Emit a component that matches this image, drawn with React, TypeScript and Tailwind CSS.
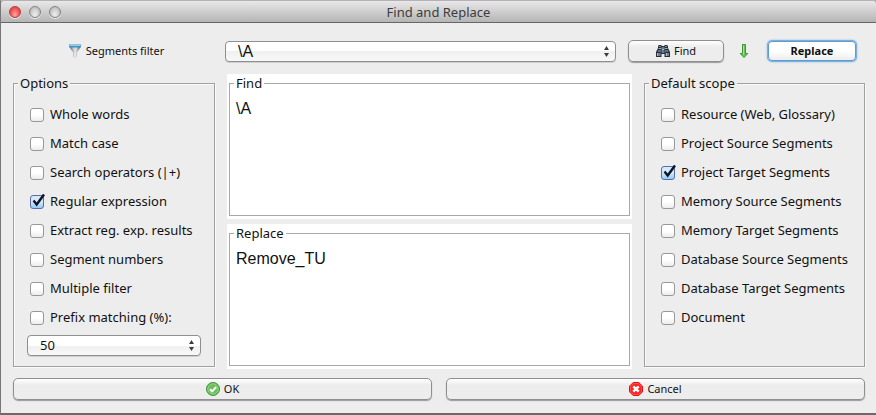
import { useState } from "react";
import type { ReactNode } from "react";

const OPTIONS = [
  "Whole words",
  "Match case",
  "Search operators (|+)",
  "Regular expression",
  "Extract reg. exp. results",
  "Segment numbers",
  "Multiple filter",
  "Prefix matching (%):",
];

const SCOPES = [
  "Resource (Web, Glossary)",
  "Project Source Segments",
  "Project Target Segments",
  "Memory Source Segments",
  "Memory Target Segments",
  "Database Source Segments",
  "Database Target Segments",
  "Document",
];

function FunnelIcon() {
  return (
    <svg width="14" height="16" viewBox="0 0 14 16" aria-hidden="true">
      <defs>
        <linearGradient id="funnel" x1="0" x2="1">
          <stop offset="0" stopColor="#55595d" />
          <stop offset="0.4" stopColor="#c9cccf" />
          <stop offset="0.55" stopColor="#e2e4e6" />
          <stop offset="1" stopColor="#4c5054" />
        </linearGradient>
      </defs>
      <path d="M1 3.5h12L9 9.5V13l-1.5 2H6L5 13V9.5z" fill="url(#funnel)" />
      <path d="M6 9.5h2V14H6z" fill="#e4e6e7" />
      <path d="M.8 1.5h12.4l-.7 3h-11z" fill="#3f96c6" />
      <path d="M1.5 2.5h11" stroke="#8fcdea" />
    </svg>
  );
}

function BinocularsIcon() {
  return (
    <svg width="14" height="14" viewBox="0 0 14 14" aria-hidden="true">
      <path d="M3 1h2.5v1h3V1H11l1 1v2l2 4v5H8.500V10h-3v3H0V8l2-4V2z" fill="#27303a" />
      <path d="M3 2.5h2M9 2.5h2" stroke="#7f8e9c" />
      <path d="M2.5 4.5h3M8.5 4.5h3" stroke="#9dacb9" />
      <path d="M2 6h3v2H1.5zM9 6h3l.5 2H9z" fill="#5d7083" />
      <path d="M5.5 3h3v6h-3z" fill="#66788a" />
      <path d="M6 5.5h2" stroke="#a9b9c8" />
      <path d="M1 9h3.500v3H1zM9.500 9H13v3H9.500z" fill="#6f8295" />
      <path d="M1.5 9v3M10.5 9v3" stroke="#a9b9c8" />
    </svg>
  );
}

function DownArrowIcon() {
  return (
    <svg width="10" height="16" viewBox="0 0 10 16" aria-hidden="true">
      <path d="M3.5 1.5h3v9h2.3L5 14.5l-3.8-4h2.3z" fill="#6cc15c" stroke="#3b9636" />
      <path d="M4.5 2.5v9" stroke="#a8e29b" />
    </svg>
  );
}

function OkIcon() {
  return (
    <svg width="14" height="14" viewBox="0 0 14 14" aria-hidden="true">
      <circle cx="7" cy="7" r="6.5" fill="#4fae45" stroke="#3f9638" />
      <circle cx="7" cy="7" r="5.3" fill="#6bc05c" stroke="#a5dc9a" strokeWidth="0.8" />
      <path d="M4 7.2l2.2 2.2L10.2 5" fill="none" stroke="#fff" strokeWidth="2" />
    </svg>
  );
}

function CancelIcon() {
  return (
    <svg width="14" height="14" viewBox="0 0 14 14" aria-hidden="true">
      <path d="M4.2.5h5.6l3.7 3.7v5.6l-3.7 3.7H4.2L.5 9.8V4.2z" fill="#f22" stroke="#e01010" />
      <path d="M4.5 1.5h5l3 3v5l-3 3h-5l-3-3v-5z" fill="none" stroke="#ff7070" strokeWidth="0.6" />
      <path d="M4.3 4.3l5.4 5.4M9.7 4.3L4.3 9.7" stroke="#fff" strokeWidth="2.4" />
    </svg>
  );
}

function Light({ red = false }: { red?: boolean }) {
  return (
    <button
      type="button"
      aria-label={red ? "Close" : "Window control"}
      className={
        red
          ? "size-3 rounded-full border border-[#a84448] bg-radial-[at_50%_75%] from-[#ffaaa4] via-[#fb5a5c] to-[#c8343a] shadow-[0_1px_0_#eee]"
          : "size-3 rounded-full border border-[#858585] bg-radial-[at_50%_75%] from-[#efefef] via-[#cfcfcf] to-[#a8a8a8] shadow-[0_1px_0_#eee]"
      }
    />
  );
}

function CheckRow({ label, initial }: { label: string; initial: boolean }) {
  const [checked, setChecked] = useState(initial);
  return (
    <label className="flex h-[29px] items-center gap-1.5 whitespace-nowrap">
      <span className="relative flex">
        <input
          type="checkbox"
          checked={checked}
          onChange={() => setChecked(!checked)}
          className="size-[14px] appearance-none rounded-[3px] border border-[#989898] bg-linear-to-b from-white from-50% to-[#ececec] checked:border-[#5a6da8] checked:from-[#d5e9fa] checked:to-[#8ccbf8]"
        />
        {checked && (
          <svg
            width="16"
            height="16"
            viewBox="0 0 16 16"
            className="pointer-events-none absolute bottom-0 left-0"
            aria-hidden="true"
          >
            <path d="M3.5 7.5l3.2 4L14 1.5" fill="none" stroke="#0b1526" strokeWidth="2.4" />
          </svg>
        )}
      </span>
      {label}
    </label>
  );
}

function Popup({ id, label, value, className }: { id: string; label?: string; value: string; className: string }) {
  return (
    <div className="relative">
      <select
        id={id}
        aria-label={label}
        defaultValue={value}
        className={`block h-[21px] w-full appearance-none rounded-[4px] border border-[#8f8f8f] bg-linear-to-b from-white from-50% via-[#f0f0f0] via-50% to-[#f8f8f8] px-3 leading-[19px] shadow-[0_1px_0_#d0d0d0] ${className}`}
      >
        <option>{value}</option>
      </select>
      <svg
        width="5"
        height="11"
        viewBox="0 0 5 11"
        className="pointer-events-none absolute top-[5px] right-[7px]"
        aria-hidden="true"
      >
        <path d="M2.5 0L5 4H0zM0 7h5L2.5 11z" fill="#3c3c3c" />
      </svg>
    </div>
  );
}

function Group({ title, children }: { title: string; children: ReactNode }) {
  return (
    <fieldset className="mb-[2px] min-w-0 border border-[#a0a0a0] px-1 pb-[10px] shadow-[1px_1px_0_#fafafa,inset_1px_1px_0_#fafafa]">
      <legend className="bg-[#ededed] px-0.5 leading-[18px]">{title}</legend>
      <div className="px-[9px] pt-2">{children}</div>
    </fieldset>
  );
}

function TextPanel({ title, value }: { title: string; value: string }) {
  return (
    <div className="flex flex-1 bg-white px-[2px] pb-[3px]">
      <fieldset className="flex min-w-0 flex-1 border border-[#a8a8a8] px-1">
        <legend className="bg-white px-0.5 leading-[18px]">{title}</legend>
        <textarea
          aria-label={title}
          defaultValue={value}
          spellCheck={false}
          className="block w-full resize-none px-0.5 pt-[7px] font-['Liberation_Sans',sans-serif] text-[16px] leading-5 outline-none"
        />
      </fieldset>
    </div>
  );
}

const plainButton =
  "flex h-[22px] items-center justify-center gap-1 rounded-[5px] border border-[#8f8f8f] bg-linear-to-b from-white to-[#ededed] to-30% text-[11px] shadow-[0_1px_1px_#999]";

export default function App() {
  return (
    <div className="border-t border-b-2 border-l border-t-[#b5b0b5] border-b-[#6a6a6a] border-l-[#777] bg-[#b5b0b5] font-['Noto_Sans',sans-serif] text-[13px] text-[#111]">
      <main className="rounded-t-[4px] bg-[#ededed]">
        <header className="grid h-[22px] grid-cols-[60px_1fr_60px] items-center rounded-t-[4px] border-b border-[#666] bg-linear-to-b from-[#e8e8e8] to-[#b5b5b5] px-2">
          <div className="flex gap-2">
            <Light red />
            <Light />
            <Light />
          </div>
          <h1 className="text-center leading-5 text-[#3c3c3c]">Find and Replace</h1>
        </header>

        <div className="pt-[17px] pr-[11px] pb-[13px] pl-3">
          <div className="flex h-[22px] items-center">
            <label
              htmlFor="segments-filter"
              className="flex w-[212px] items-center justify-center gap-1 pr-1.5 text-[11px]"
            >
              <FunnelIcon />
              Segments filter
            </label>
            <div className="flex-1">
              <Popup
                id="segments-filter"
                value="\A"
                className="font-['Liberation_Sans',sans-serif] text-[16px]"
              />
            </div>
            <button type="button" className={`${plainButton} ml-3 w-24`}>
              <BinocularsIcon />
              Find
            </button>
            <button type="button" aria-label="Search direction" className="mx-[15px]">
              <DownArrowIcon />
            </button>
            <button
              type="button"
              className="mr-[9px] ml-1 h-5 w-[88px] rounded-[4px] border border-[#5d9bd0] bg-linear-to-b from-white from-50% to-[#ededed] text-[11px] leading-4 font-bold shadow-[0_0_0_1px_#79b0de,0_0_2px_1px_#8fbfe6]"
            >
              Replace
            </button>
          </div>

          <div className="mt-3 grid grid-cols-[202px_1fr_221px] gap-3">
            <Group title="Options">
              <div className="pb-[3px] pl-[3px]">
                {OPTIONS.map((label) => (
                  <CheckRow key={label} label={label} initial={label === "Regular expression"} />
                ))}
              </div>
              <Popup id="prefix-percent" label="Prefix matching" value="50" className="text-[13px]" />
            </Group>
            <div className="flex flex-col gap-[5px]">
              <TextPanel title="Find" value="\A" />
              <TextPanel title="Replace" value="Remove_TU" />
            </div>
            <Group title="Default scope">
              <div className="pl-[3px]">
                {SCOPES.map((label) => (
                  <CheckRow key={label} label={label} initial={label === "Project Target Segments"} />
                ))}
              </div>
            </Group>
          </div>

          <div className="mt-[9px] grid grid-cols-2 gap-[14px]">
            <button type="button" className={plainButton}>
              <OkIcon />
              OK
            </button>
            <button type="button" className={plainButton}>
              <CancelIcon />
              Cancel
            </button>
          </div>
        </div>
      </main>
    </div>
  );
}
